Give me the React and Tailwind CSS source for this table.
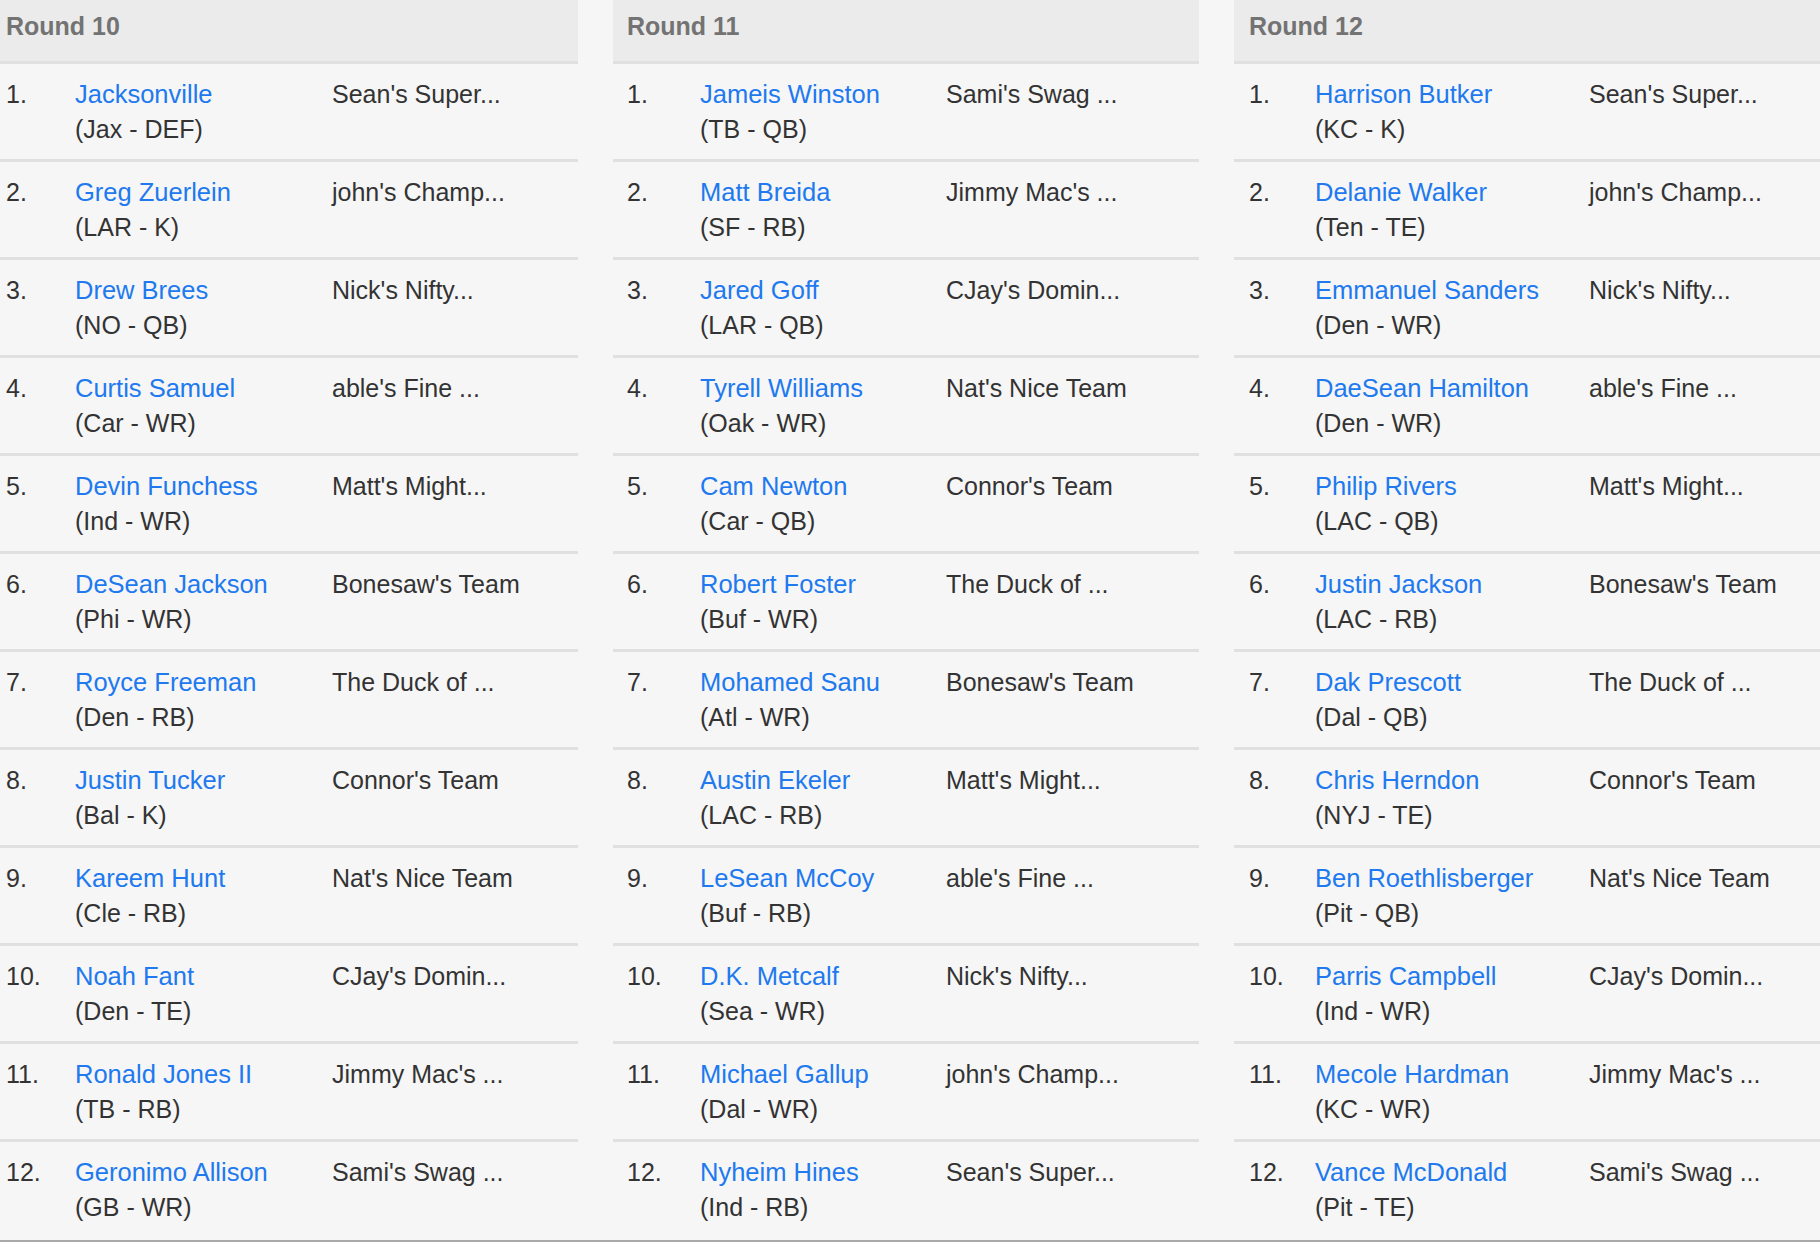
const rounds = [
  {
    title: 'Round 10',
    cols: 'grid-cols-[69px_257px_1fr]',
    pad: 'pl-[14px]',
    picks: [
      ['Jacksonville', 'Jax - DEF', "Sean's Super..."],
      ['Greg Zuerlein', 'LAR - K', "john's Champ..."],
      ['Drew Brees', 'NO - QB', "Nick's Nifty..."],
      ['Curtis Samuel', 'Car - WR', "able's Fine ..."],
      ['Devin Funchess', 'Ind - WR', "Matt's Might..."],
      ['DeSean Jackson', 'Phi - WR', "Bonesaw's Team"],
      ['Royce Freeman', 'Den - RB', 'The Duck of ...'],
      ['Justin Tucker', 'Bal - K', "Connor's Team"],
      ['Kareem Hunt', 'Cle - RB', "Nat's Nice Team"],
      ['Noah Fant', 'Den - TE', "CJay's Domin..."],
      ['Ronald Jones II', 'TB - RB', "Jimmy Mac's ..."],
      ['Geronimo Allison', 'GB - WR', "Sami's Swag ..."],
    ],
  },
  {
    title: 'Round 11',
    cols: 'grid-cols-[73px_246px_1fr]',
    pad: 'pl-[14px]',
    picks: [
      ['Jameis Winston', 'TB - QB', "Sami's Swag ..."],
      ['Matt Breida', 'SF - RB', "Jimmy Mac's ..."],
      ['Jared Goff', 'LAR - QB', "CJay's Domin..."],
      ['Tyrell Williams', 'Oak - WR', "Nat's Nice Team"],
      ['Cam Newton', 'Car - QB', "Connor's Team"],
      ['Robert Foster', 'Buf - WR', 'The Duck of ...'],
      ['Mohamed Sanu', 'Atl - WR', "Bonesaw's Team"],
      ['Austin Ekeler', 'LAC - RB', "Matt's Might..."],
      ['LeSean McCoy', 'Buf - RB', "able's Fine ..."],
      ['D.K. Metcalf', 'Sea - WR', "Nick's Nifty..."],
      ['Michael Gallup', 'Dal - WR', "john's Champ..."],
      ['Nyheim Hines', 'Ind - RB', "Sean's Super..."],
    ],
  },
  {
    title: 'Round 12',
    cols: 'grid-cols-[66px_274px_1fr]',
    pad: 'pl-[15px]',
    picks: [
      ['Harrison Butker', 'KC - K', "Sean's Super..."],
      ['Delanie Walker', 'Ten - TE', "john's Champ..."],
      ['Emmanuel Sanders', 'Den - WR', "Nick's Nifty..."],
      ['DaeSean Hamilton', 'Den - WR', "able's Fine ..."],
      ['Philip Rivers', 'LAC - QB', "Matt's Might..."],
      ['Justin Jackson', 'LAC - RB', "Bonesaw's Team"],
      ['Dak Prescott', 'Dal - QB', 'The Duck of ...'],
      ['Chris Herndon', 'NYJ - TE', "Connor's Team"],
      ['Ben Roethlisberger', 'Pit - QB', "Nat's Nice Team"],
      ['Parris Campbell', 'Ind - WR', "CJay's Domin..."],
      ['Mecole Hardman', 'KC - WR', "Jimmy Mac's ..."],
      ['Vance McDonald', 'Pit - TE', "Sami's Swag ..."],
    ],
  },
]

const RoundColumn = ({ round }) => {
  return (
    <div className="w-[586px] shrink-0">
      <div className={`h-[64px] bg-[#ebebeb] border-b-[3px] border-[#e0e0e0] pt-[9px] ${round.pad}`}>
        <span className="font-bold text-[#737373]">{round.title}</span>
      </div>
      {round.picks.map(([name, team, owner], i) => (
        <div
          key={name}
          className={`grid ${round.cols} ${round.pad} h-[98px] pt-[13px] border-b-[3px] border-[#e0e0e0] last:border-b-0`}
        >
          <div className="text-[#333]">{i + 1}.</div>
          <div>
            <div className="text-[#2079ef] whitespace-nowrap text-[25.5px]">{name}</div>
            <div className="text-[#333] whitespace-nowrap">({team})</div>
          </div>
          <div className="text-[#333] whitespace-nowrap">{owner}</div>
        </div>
      ))}
    </div>
  )
}

const App = () => {
  return (
    <div className="w-[1820px] h-[1242px] overflow-hidden bg-[#f6f6f6] font-['Liberation_Sans',Arial,sans-serif] text-[25px] leading-[35px]">
      <div className="flex gap-[35px] -ml-[8px] h-[1240px] border-b-2 border-[#a9a9a9] box-content">
        {rounds.map((r) => (
          <RoundColumn key={r.title} round={r} />
        ))}
      </div>
    </div>
  )
}

export default App
